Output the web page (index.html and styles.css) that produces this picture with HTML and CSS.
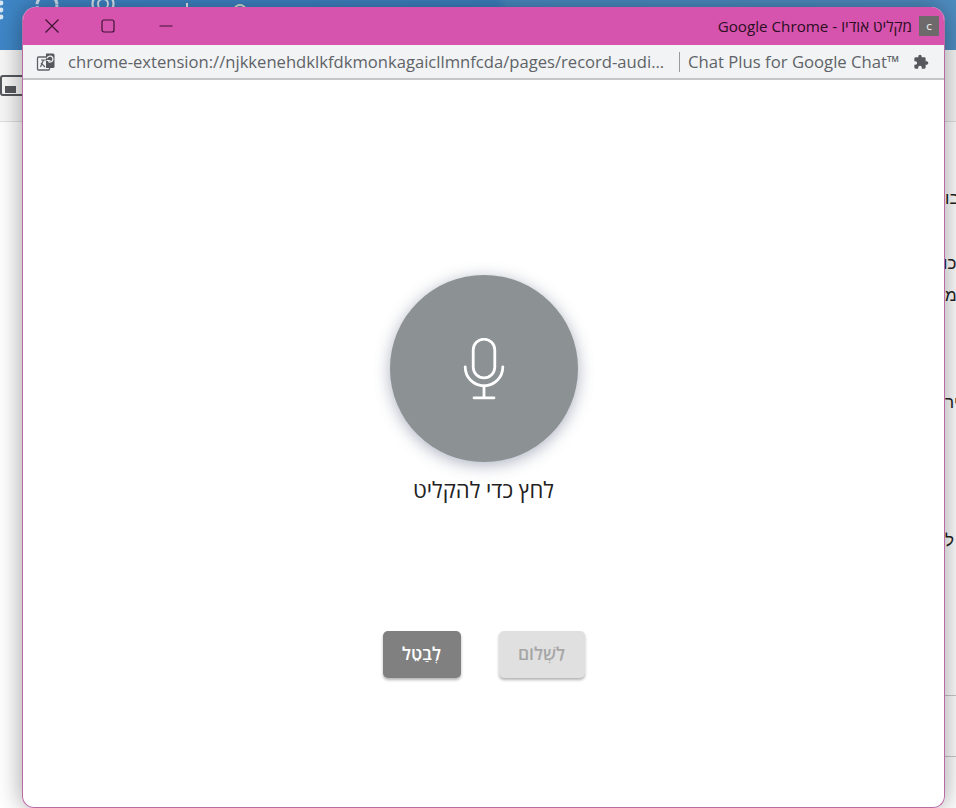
FILE: index.html
```html
<!DOCTYPE html>
<html lang="he">
<head>
<meta charset="utf-8">
<title>מקליט אודיו</title>
<link rel="stylesheet" href="styles.css">
</head>
<body>
<div class="desktop">
  <header class="bg-top">
    <svg class="bg-dots" width="6" height="22" viewBox="0 0 6 22"><circle cx="1" cy="3" r="2.400"/><circle cx="1" cy="10" r="2.400"/><circle cx="1" cy="17" r="2.400"/></svg>
    <svg class="bg-gear" width="26" height="26" viewBox="0 0 26 26"><circle cx="13" cy="13" r="10" fill="none" stroke="#cfe0f0" stroke-width="3" stroke-dasharray="6 2"/></svg>
    <svg class="bg-ring" width="24" height="24" viewBox="0 0 24 24"><circle cx="12" cy="12" r="10.500" fill="none" stroke="#dbe8f4" stroke-width="2.200"/><circle cx="12" cy="12" r="5" fill="none" stroke="#dbe8f4" stroke-width="2"/></svg>
    <span class="bg-tick"></span>
    <span class="bg-dot"></span>
  </header>
  <div class="bg-tool"><span class="bg-box"><span class="bg-fill"></span></span></div>
  <div class="bg-text bg-t1">בו</div>
  <div class="bg-text bg-t2">כו</div>
  <div class="bg-text bg-t3">מ</div>
  <div class="bg-text bg-t4">יר</div>
  <div class="bg-text bg-t5">ל</div>
  <div class="bg-line bg-l1"></div>
  <div class="bg-line bg-l2"></div>

  <section class="window">
    <div class="titlebar">
      <div class="controls">
        <svg class="ctl" width="14" height="14" viewBox="0 0 14 14"><path d="M0.500 0.500 13.500 13.500M13.500 0.500 0.500 13.500"/></svg>
        <svg class="ctl" width="14" height="14" viewBox="0 0 14 14"><rect x="1" y="1" width="12" height="12" rx="2"/></svg>
        <svg class="ctl" width="14" height="14" viewBox="0 0 14 14"><path d="M0.500 7H13.500"/></svg>
      </div>
      <div class="title">
        <span class="title-text" dir="ltr">Google Chrome - <span dir="rtl">מקליט אודיו</span></span>
        <span class="favicon">C</span>
      </div>
    </div>
    <div class="addressbar">
      <svg class="ext-icon" width="20" height="20" viewBox="0 0 20 20">
        <rect x="1.500" y="5" width="12" height="13" rx="1" fill="#f1f3f4" stroke="#5f6368" stroke-width="1.300"/>
        <path d="M5 8h5M7.500 8l-3 7M5 11l4 4" fill="none" stroke="#5f6368" stroke-width="1.200"/>
        <path d="M10 1.500h7a1.500 1.500 0 0 1 1.500 1.500v11.500a1.500 1.500 0 0 1-1.500 1.500h-7z" fill="#55595d"/>
        <path d="M11 6.500a3 3 0 1 1 1.200 3" fill="none" stroke="#f1f3f4" stroke-width="1.300"/>
        <path d="M10.500 8.500h4" stroke="#f1f3f4" stroke-width="1.200"/>
      </svg>
      <span class="url">chrome-extension://njkkenehdklkfdkmonkagaicllmnfcda/pages/record-audi...</span>
      <span class="sep"></span>
      <span class="ext-name">Chat Plus for Google Chat™</span>
      <svg class="puzzle" width="16" height="16" viewBox="0 0 24 24"><path fill="#55595d" d="M20.500 11H19V7a2 2 0 0 0-2-2h-4V3.500a2.500 2.500 0 0 0-5 0V5H4a2 2 0 0 0-2 2v3.800h1.500a2.700 2.700 0 0 1 0 5.400H2V20a2 2 0 0 0 2 2h3.800v-1.500a2.700 2.700 0 0 1 5.400 0V22H17a2 2 0 0 0 2-2v-4h1.500a2.500 2.500 0 0 0 0-5z"/></svg>
    </div>
    <main class="content">
      <div class="recorder">
        <button class="mic" type="button" aria-label="הקלט">
          <svg width="42" height="62" viewBox="0 0 42 62" fill="none" stroke="#fff" stroke-width="2.800" stroke-linecap="round">
            <rect x="10.200" y="1.200" width="21.600" height="38.600" rx="10.800"/>
            <path d="M2.200 29a18.800 18.800 0 0 0 37.600 0"/>
            <path d="M21 48V59.800M11 59.800H31"/>
          </svg>
        </button>
        <div class="hint" dir="rtl">לחץ כדי להקליט</div>
      </div>
      <div class="actions">
        <button class="btn btn-cancel" type="button">לְבַטֵל</button>
        <button class="btn btn-send" type="button" disabled>לִשְׁלוֹם</button>
      </div>
    </main>
  </section>
</div>
</body>
</html>
```

FILE: styles.css
```css
* { box-sizing: border-box; }
html, body { margin: 0; padding: 0; }
body { width: 956px; height: 808px; overflow: hidden; background: #fff; font-family: "Open Sans", "Noto Sans", "Liberation Sans", sans-serif; }
.desktop { position: relative; width: 956px; height: 808px; overflow: hidden; }

.bg-top { height: 50px; background: linear-gradient(90deg, #3f87c8 0%, #3d82c2 52%, #4a8cc4 53%, #4f8ec2 100%); }
.bg-dots { position: absolute; left: 0; top: 0; fill: #dbe8f4; }
.bg-gear { position: absolute; left: 34px; top: -8px; }
.bg-ring { position: absolute; left: 91px; top: -8px; }
.bg-tick { position: absolute; left: 186px; top: 3px; width: 2px; height: 6px; background: #e8f0f8; }
.bg-dot { position: absolute; left: 233px; top: 4px; width: 14px; height: 14px; border-radius: 50%; border: 2px solid #d5e6d8; }
.bg-tool { height: 72px; background: #f7f7f7; border-bottom: 1px solid #e0e0e0; position: relative; }
.bg-box { position: absolute; left: 0; top: 25px; width: 26px; height: 21px; border: 2px solid #55595d; border-radius: 3px; }
.bg-fill { position: absolute; left: 3px; top: 9px; width: 11px; height: 7px; background: #55595d; }
.bg-text { position: absolute; left: 945px; width: 20px; font-size: 17px; line-height: 20px; color: #222; font-family: "Liberation Sans", sans-serif; }
.bg-t1 { top: 189px; }
.bg-t2 { top: 254px; left: 943px; }
.bg-t3 { top: 286px; }
.bg-t4 { top: 393px; }
.bg-t5 { top: 531px; }
.bg-line { position: absolute; left: 945px; width: 11px; height: 1px; background: #c8c8c8; }
.bg-l1 { top: 695px; }
.bg-l2 { top: 756px; }

.window { position: absolute; left: 22px; top: 7px; width: 923px; height: 801px; display: flex; flex-direction: column; background: #fff; border-radius: 14px 14px 12px 12px; overflow: hidden; border: 1px solid #bb6aa6; border-top: 0; z-index: 1; }
.desktop::after { content: ""; position: absolute; left: 22px; top: 7px; width: 923px; height: 801px; border-radius: 14px 14px 12px 12px; box-shadow: 0 0 26px rgba(0,0,0,.38); z-index: 0; pointer-events: none; }

.titlebar { height: 38px; margin: 0 -1px; background: #d653ae; display: flex; align-items: center; justify-content: space-between; padding: 0 6px 0 23px; flex: none; }
.controls { display: flex; align-items: center; gap: 42px; }
.controls .ctl { fill: none; stroke: #3f1433; stroke-width: 1.200; }
.controls .ctl:nth-child(3) { margin-left: 2px; }
.title { display: flex; align-items: center; gap: 7px; }
.title-text { font-size: 15.200px; color: #2a0f22; }
.favicon { width: 20px; height: 20px; background: #6e6a6c; color: #e8e8e8; font-size: 9px; font-weight: 600; display: flex; align-items: center; justify-content: center; }

.addressbar { height: 35px; background: #f1f3f4; border-bottom: 2px solid #c4c6c8; display: flex; align-items: center; padding: 0 13px; flex: none; }
.ext-icon { flex: none; }
.url { margin-left: 12px; width: 598px; font-size: 16.620px; color: #5f6368; white-space: nowrap; flex: none; }
.sep { width: 1px; height: 20px; background: #9a9a9a; margin-left: 13px; flex: none; }
.ext-name { margin-left: 8px; font-size: 16.700px; color: #5f6368; white-space: nowrap; flex: none; }
.puzzle { margin-left: 13px; flex: none; }

.content { flex: 1; display: flex; flex-direction: column; align-items: center; padding-top: 195px; }
.recorder { display: flex; flex-direction: column; align-items: center; }
.mic { width: 188px; height: 187px; border-radius: 50%; border: 0; padding: 0; background: #8c9194; box-shadow: 0 3px 16px rgba(70,85,115,.45); display: flex; align-items: center; justify-content: center; }
.hint { margin-top: 13px; font-size: 22px; line-height: 28px; color: #222; }
.actions { display: flex; gap: 38px; margin-top: 128px; }
.btn { height: 47px; border: 0; border-radius: 5px; padding: 0 0 3px; font-family: inherit; font-size: 17.500px; font-weight: 600; box-shadow: 0 2px 3px rgba(0,0,0,.3); }
.btn-cancel { width: 78px; background: #808080; color: #fff; }
.btn-send { width: 86px; background: #e0e0e0; color: #a6a6a6; }
```
